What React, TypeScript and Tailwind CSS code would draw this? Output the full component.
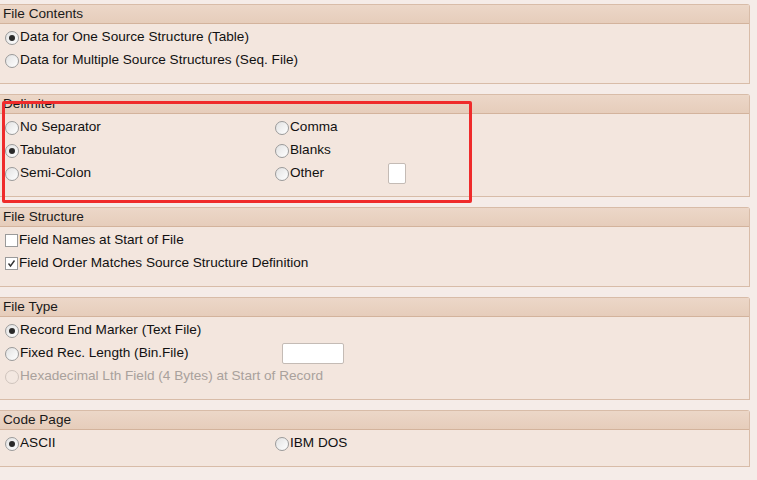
import React from 'react';

const font = { fontFamily: '"Liberation Sans", Arial, sans-serif' };

function Radio({ checked = false, disabled = false }: { checked?: boolean; disabled?: boolean }) {
  return (
    <span
      className={`flex items-center justify-center w-[14px] h-[14px] rounded-full border shrink-0 ${
        disabled
          ? 'border-[#cfc4bd] bg-[#f3e8e1]'
          : 'border-[#9a9a9a] bg-gradient-to-br from-[#e2e2e2] to-[#ffffff]'
      }`}
    >
      {checked && <span className="w-[6px] h-[6px] rounded-full bg-[#2a2a2a]" />}
    </span>
  );
}

function Checkbox({ checked = false }: { checked?: boolean }) {
  return (
    <span className="flex items-center justify-center w-[13px] h-[13px] border border-[#9a9a9a] bg-white shrink-0">
      {checked && (
        <svg width="9" height="9" viewBox="0 0 9 9">
          <path d="M1.5 4.5 L3.5 7 L7.5 1.5" fill="none" stroke="#333" strokeWidth="1.4" />
        </svg>
      )}
    </span>
  );
}

function Option({
  label,
  checked,
  disabled,
  box,
}: {
  label: string;
  checked?: boolean;
  disabled?: boolean;
  box?: boolean;
}) {
  return (
    <div className="flex items-center h-[23px] gap-[1px]">
      {box ? <Checkbox checked={checked} /> : <Radio checked={checked} disabled={disabled} />}
      <span className={`text-[13.6px] ${disabled ? 'text-[#a9a19c]' : 'text-[#111]'}`}>{label}</span>
    </div>
  );
}

function Panel({ title, children }: { title: string; children: React.ReactNode }) {
  return (
    <section className="w-[750px] border border-l-0 border-[#d8bca8] rounded-tr-[3px] bg-[#f3e6de]">
      <div className="h-[19px] flex items-center pl-[3px] text-[13.6px] text-[#1a1a1a] bg-gradient-to-b from-[#ecd7c8] to-[#e6cdbb] border-b border-[#d3b39c]">
        {title}
      </div>
      <div className="pt-[2px] pb-[11px] pl-[5px]">{children}</div>
    </section>
  );
}

export default function App() {
  return (
    <div className="relative w-[757px] h-[480px] bg-[#f5ece8] overflow-hidden" style={font}>
      <div className="flex flex-col gap-[10px] pt-[4px]">
        <Panel title="File Contents">
          <Option label="Data for One Source Structure (Table)" checked />
          <Option label="Data for Multiple Source Structures (Seq. File)" />
        </Panel>

        <Panel title="Delimiter">
          <div className="grid grid-cols-[270px_1fr]">
            <Option label="No Separator" />
            <Option label="Comma" />
            <Option label="Tabulator" checked />
            <Option label="Blanks" />
            <Option label="Semi-Colon" />
            <div className="flex items-center">
              <Option label="Other" />
              <span className="ml-[64px] w-[18px] h-[21px] border border-[#c4bbb5] rounded-[2px] bg-white" />
            </div>
          </div>
        </Panel>

        <Panel title="File Structure">
          <Option label="Field Names at Start of File" box />
          <Option label="Field Order Matches Source Structure Definition" box checked />
        </Panel>

        <Panel title="File Type">
          <Option label="Record End Marker (Text File)" checked />
          <div className="flex items-center">
            <div className="w-[277px]">
              <Option label="Fixed Rec. Length (Bin.File)" />
            </div>
            <span className="w-[62px] h-[21px] border border-[#c4bbb5] rounded-[2px] bg-white" />
          </div>
          <Option label="Hexadecimal Lth Field (4 Bytes) at Start of Record" disabled />
        </Panel>

        <Panel title="Code Page">
          <div className="grid grid-cols-[270px_1fr]">
            <Option label="ASCII" checked />
            <Option label="IBM DOS" />
          </div>
        </Panel>
      </div>

      {/* red annotation frame */}
      <div className="absolute left-[2px] top-[101px] w-[470px] h-[102px] border-[3px] border-[#ef2b2b] rounded-[2px] pointer-events-none" />
    </div>
  );
}
